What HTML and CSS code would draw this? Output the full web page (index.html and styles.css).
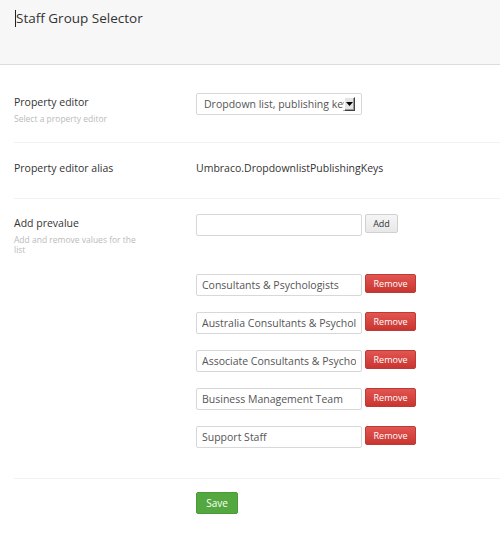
FILE: index.html
```html
<!DOCTYPE html>
<html>
<head>
<meta charset="utf-8">
<link rel="stylesheet" href="styles.css">
</head>
<body>
<div class="header">
  <h1 class="title"><span class="caret"></span>Staff Group Selector</h1>
</div>
<div class="form">
  <div class="row row-editor">
    <div class="label">
      <div class="label-name">Property editor</div>
      <div class="label-desc">Select a property editor</div>
    </div>
    <div class="control">
      <div class="select">
        <span class="select-text">Dropdown list, publishing keys</span>
        <span class="select-arrow"><svg width="7" height="4" viewBox="0 0 7 4"><path d="M0 0H7L3.5 4Z" fill="#000"/></svg></span>
      </div>
    </div>
  </div>
  <div class="row row-alias">
    <div class="label">
      <div class="label-name">Property editor alias</div>
    </div>
    <div class="control">
      <div class="alias">Umbraco.DropdownlistPublishingKeys</div>
    </div>
  </div>
  <div class="row row-prevalues">
    <div class="label">
      <div class="label-name">Add prevalue</div>
      <div class="label-desc wrap">Add and remove values for the list</div>
    </div>
    <div class="control">
      <div class="line">
        <input class="input" type="text" value="">
        <button class="btn btn-add">Add</button>
      </div>
      <div class="values">
        <div class="line">
          <input class="input" type="text" value="Consultants &amp; Psychologists">
          <button class="btn btn-remove">Remove</button>
        </div>
        <div class="line">
          <input class="input" type="text" value="Australia Consultants &amp; Psychologists">
          <button class="btn btn-remove">Remove</button>
        </div>
        <div class="line">
          <input class="input" type="text" value="Associate Consultants &amp; Psychologists">
          <button class="btn btn-remove">Remove</button>
        </div>
        <div class="line">
          <input class="input" type="text" value="Business Management Team">
          <button class="btn btn-remove">Remove</button>
        </div>
        <div class="line">
          <input class="input" type="text" value="Support Staff">
          <button class="btn btn-remove">Remove</button>
        </div>
      </div>
    </div>
  </div>
  <div class="actions">
    <button class="btn btn-save">Save</button>
  </div>
</div>
</body>
</html>
```

FILE: styles.css
```css
* { box-sizing: border-box; }
html, body { margin: 0; padding: 0; background: #fff; }
body {
  font-family: "Open Sans", "DejaVu Sans", sans-serif;
  color: #343434;
  width: 500px;
}
.header {
  height: 65px;
  background: #f7f7f7;
  border-bottom: 1px solid #dcdcdc;
  padding: 8px 0 0 15px;
}
.title {
  margin: 0;
  font-size: 13.5px;
  font-weight: 400;
  line-height: 20px;
  color: #333;
  display: flex;
  align-items: center;
}
.caret {
  display: inline-block;
  width: 1px;
  height: 17px;
  background: #222;
}
.form {
  padding-left: 14px;
}
.row {
  display: grid;
  grid-template-columns: 182px 1fr;
  border-bottom: 1px solid #f2f2f2;
}
.row-editor { padding: 28px 0 18px; }
.row-alias { padding: 16px 0 21px; }
.row-prevalues { padding: 15px 0 30px; }
.label-name {
  font-size: 10.5px;
  line-height: 18px;
  color: #333;
}
.label-desc {
  font-size: 8.5px;
  line-height: 11px;
  color: #bbb;
  margin-top: 2px;
}
.label-desc.wrap { width: 125px; line-height: 10px; margin-top: 3px; }
.select {
  width: 166px;
  height: 22px;
  border: 1px solid #d8d8d8;
  border-radius: 2px;
  display: flex;
  align-items: center;
  padding: 0 0 0 7px;
  overflow: hidden;
  background: #fff;
}
.select-text {
  font-size: 10.5px;
  color: #555;
  white-space: nowrap;
  overflow: hidden;
  width: 140px;
  flex: none;
}
.select-arrow {
  width: 11px;
  height: 14px;
  background: #e4e4e4;
  border: 1px solid;
  border-color: #fff #404040 #404040 #fff;
  box-shadow: inset -1px -1px 0 #9a9a9a;
  display: flex;
  align-items: center;
  justify-content: center;
  flex: none;
}
.alias {
  font-size: 10.5px;
  line-height: 18px;
  color: #333;
}
.line {
  display: flex;
  align-items: flex-start;
  gap: 3px;
}
.values {
  margin-top: 38px;
  display: flex;
  flex-direction: column;
  gap: 16px;
}
.input {
  width: 166px;
  height: 22px;
  border: 1px solid #d8d8d8;
  border-radius: 2px;
  padding: 0 5px;
  font-family: "Open Sans", sans-serif;
  font-size: 10.5px;
  color: #555;
  background: #fff;
  outline: none;
  margin: 0;
}
.btn {
  font-family: "Open Sans", sans-serif;
  height: 19px;
  border-radius: 2px;
  padding: 0;
  margin: 0;
  cursor: pointer;
}
.btn-add {
  width: 33px;
  font-size: 9px;
  color: #333;
  background: linear-gradient(#f5f5f5, #e8e8e8);
  border: 1px solid #d0d0d0;
}
.btn-remove {
  width: 51px;
  font-size: 9px;
  color: #fff;
  background: linear-gradient(#e25551, #c93631);
  border: 1px solid #bd3a35;
}
.actions {
  padding: 11px 0 0 182px;
}
.btn-save {
  width: 42px;
  height: 22px;
  font-size: 10px;
  color: #fff;
  background: #53a93f;
  border: 1px solid #4a9a37;
}
```
